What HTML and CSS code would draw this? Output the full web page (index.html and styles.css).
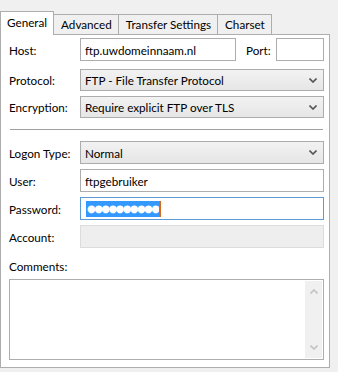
FILE: index.html
```html
<!DOCTYPE html>
<html lang="en">
<head>
    <meta charset="UTF-8">
    <meta name="viewport" content="width=device-width, initial-scale=1.0">
    <title>Site Manager - General</title>
    <link rel="stylesheet" href="styles.css">
</head>
<body>
    <div class="dialog">
        <div class="tabs">
            <div class="tab active">General</div>
            <div class="tab">Advanced</div>
            <div class="tab">Transfer Settings</div>
            <div class="tab">Charset</div>
        </div>
        <div class="panel">
            <div class="row host-row">
                <span class="label">Host:</span>
                <div class="field host">ftp.uwdomeinnaam.nl</div>
                <span class="port-label">Port:</span>
                <div class="field port"></div>
            </div>
            <div class="row row-protocol">
                <span class="label">Protocol:</span>
                <div class="field select">
                    <span>FTP - File Transfer Protocol</span>
                    <svg class="chevron" width="8" height="5" viewBox="0 0 8 5"><polyline points="0.5,0.5 4,4 7.5,0.5" fill="none" stroke="#555" stroke-width="1.6"/></svg>
                </div>
            </div>
            <div class="row row-encryption">
                <span class="label">Encryption:</span>
                <div class="field select">
                    <span>Require explicit FTP over TLS</span>
                    <svg class="chevron" width="8" height="5" viewBox="0 0 8 5"><polyline points="0.5,0.5 4,4 7.5,0.5" fill="none" stroke="#555" stroke-width="1.6"/></svg>
                </div>
            </div>
            <div class="separator"></div>
            <div class="row row-logon">
                <span class="label">Logon Type:</span>
                <div class="field select">
                    <span>Normal</span>
                    <svg class="chevron" width="8" height="5" viewBox="0 0 8 5"><polyline points="0.5,0.5 4,4 7.5,0.5" fill="none" stroke="#555" stroke-width="1.6"/></svg>
                </div>
            </div>
            <div class="row row-user">
                <span class="label">User:</span>
                <div class="field">ftpgebruiker</div>
            </div>
            <div class="row row-password">
                <span class="label">Password:</span>
                <div class="field focused">
                    <span class="selected">●●●●●●●●●●</span><span class="caret"></span>
                </div>
            </div>
            <div class="row row-account">
                <span class="label">Account:</span>
                <div class="field disabled"></div>
            </div>
            <div class="comments-label">Comments:</div>
            <div class="comments">
                <div class="scrollbar">
                    <svg width="8" height="5" viewBox="0 0 8 5"><polyline points="0.5,4.5 4,1 7.5,4.5" fill="none" stroke="#c2c2c2" stroke-width="1.6"/></svg>
                    <svg width="8" height="5" viewBox="0 0 8 5"><polyline points="0.5,0.5 4,4 7.5,0.5" fill="none" stroke="#c2c2c2" stroke-width="1.6"/></svg>
                </div>
            </div>
        </div>
    </div>
</body>
</html>
```

FILE: styles.css
```css
body {
    margin: 0;
    background-color: #f0f0f0;
    font-family: Lato, "Noto Sans", sans-serif;
    font-size: 11.7px;
    color: #000000;
}
.dialog {
    width: 330px;
}
.tabs {
    display: flex;
    align-items: flex-end;
    height: 34px;
}
.tab {
    box-sizing: border-box;
    height: 20px;
    padding: 0 6px 0 7px;
    margin-left: -1px;
    line-height: 18px;
    background-color: #f0f0f0;
    border: 1px solid #adadad;
    border-bottom: none;
}
.tab:first-child {
    margin-left: 0;
}
.tab.active {
    position: relative;
    z-index: 1;
    height: 24px;
    margin-bottom: -1px;
    padding: 2px 6px 0 6px;
    background-color: #ffffff;
    line-height: 16px;
}
.panel {
    box-sizing: border-box;
    height: 334px;
    padding: 3px 5px 0 8px;
    background-color: #ffffff;
    border: 1px solid #adadad;
}
.row {
    display: flex;
    align-items: center;
    height: 23px;
}
.label {
    width: 71px;
    flex-shrink: 0;
}
.field {
    box-sizing: border-box;
    flex: 1;
    display: flex;
    align-items: center;
    height: 100%;
    padding: 0 4px;
    border: 1px solid #adadad;
    background-color: #ffffff;
    white-space: nowrap;
}
.field.host {
    flex: 0 0 156px;
}
.port-label {
    margin-left: 10px;
    width: 30px;
}
.field.port {
    flex: 0 0 48px;
}
.row-protocol {
    margin-top: 8px;
    height: 22px;
}
.row-encryption {
    margin-top: 5px;
    height: 22px;
}
.separator {
    height: 1px;
    margin: 11px 1px 11px 1px;
    background-color: #a0a0a0;
}
.row-user,
.row-password,
.row-account {
    margin-top: 5px;
}
.select {
    justify-content: space-between;
    background: linear-gradient(#f2f2f2, #e6e6e6);
    border-color: #acacac;
}
.chevron {
    margin-right: 2px;
}
.focused {
    border-color: #5b9bd5;
    padding-left: 5px;
}
.selected {
    display: inline-block;
    height: 16px;
    line-height: 16px;
    padding: 0 1px;
    background-color: #3399ff;
    color: #ffffff;
    font-family: "DejaVu Sans", sans-serif;
    font-size: 10px;
    letter-spacing: -1.6px;
}
.caret {
    display: inline-block;
    width: 2px;
    height: 16px;
    background-color: #d86a1a;
}
.disabled {
    background-color: #eeeeee;
    border-color: #dcdcdc;
}
.comments-label {
    margin-top: 10px;
    height: 16px;
    line-height: 16px;
}
.comments {
    box-sizing: border-box;
    display: flex;
    justify-content: flex-end;
    height: 81px;
    margin-top: 5px;
    padding: 1px;
    border: 1px solid #adadad;
    background-color: #ffffff;
}
.scrollbar {
    display: flex;
    flex-direction: column;
    justify-content: space-between;
    align-items: center;
    width: 17px;
    padding: 8px 0;
    background-color: #f0f0f0;
}
```
